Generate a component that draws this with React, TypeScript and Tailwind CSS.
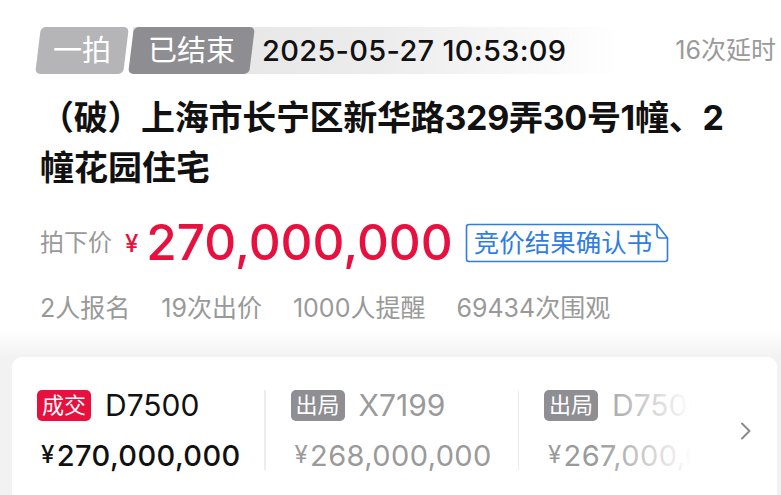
import React from "react";

function Badge() {
  return (
    <div className="relative ml-[12px] flex h-[40px] w-[204px] items-center pl-[9px]">
      <svg
        className="absolute inset-0"
        width="204"
        height="40"
        viewBox="0 0 204 40"
        fill="none"
      >
        <path
          d="M4 1.5 H192 L202.5 15 V36 Q202.5 38.5 200 38.5 H4 Q1.5 38.5 1.5 36 V4 Q1.5 1.5 4 1.5 Z"
          stroke="#2f7de1"
          strokeWidth="1.6"
          strokeLinejoin="round"
        />
        <path
          d="M192 1.5 V12 Q192 15 195 15 H202.5"
          stroke="#2f7de1"
          strokeWidth="1.6"
          strokeLinejoin="round"
        />
      </svg>
      <span className="relative text-[25.5px] leading-none text-[#2f7de1]">竞价结果确认书</span>
    </div>
  );
}

function Column({
  tag,
  name,
  price,
  win,
  divider,
}: {
  tag: string;
  name: string;
  price: string;
  win?: boolean;
  divider?: boolean;
}) {
  return (
    <div className="flex shrink-0">
      <div className={divider ? "w-[227px] shrink-0" : "w-[260px] shrink-0"}>
        <div className="flex h-[32px] items-center">
          <span
            className={
              win
                ? "flex h-[31px] items-center rounded-[5px] bg-[#e8103f] px-[5px] text-[22px] leading-none text-white"
                : "flex h-[31px] items-center rounded-[5px] bg-[#8e8e93] px-[5px] text-[22px] leading-none text-white"
            }
          >
            {tag}
          </span>
          <span
            className={
              win
                ? "ml-[14px] text-[30px] leading-none text-[#111]"
                : "ml-[14px] text-[30px] leading-none text-[#9a9a9a]"
            }
          >
            {name}
          </span>
        </div>
        <div
          className={
            win
              ? "mt-[16px] flex h-[36px] items-center pl-[4px] text-[29px] font-medium leading-none tracking-[0.4px] text-[#111]"
              : "mt-[16px] flex h-[36px] items-center pl-[4px] text-[29px] leading-none tracking-[0.4px] text-[#9a9a9a]"
          }
        >
          <span className="mr-[2px] text-[24px]">¥</span>
          {price}
        </div>
      </div>
      {divider && (
        <div className="mr-[25px] mt-[1px] h-[80px] w-[1.5px] bg-[#ececec]" />
      )}
    </div>
  );
}

export default function App() {
  return (
    <div className="h-[495px] w-full overflow-hidden bg-white font-[Inter,'Noto_Sans_CJK_SC',sans-serif]">
      <div className="px-[40px] pt-[27px]">
        {/* header row */}
        <div className="-mr-[35px] flex h-[47px] items-center">
          <div className="relative -ml-[2px] flex h-[47px] items-center">
            <div className="absolute left-[95px] top-0 h-[47px] w-[490px] bg-gradient-to-r from-[#e4e4e4] via-[#ececec] to-white" />
            <div className="relative flex h-[47px] items-center -skew-x-[7deg] rounded-[5px] bg-[#b5b5b7] px-[15px]">
              <span className="skew-x-[7deg] text-[29px] leading-none text-white">一拍</span>
            </div>
            <div className="relative ml-[5px] flex h-[47px] items-center -skew-x-[7deg] rounded-[5px] bg-[#8e8e92] px-[17px]">
              <span className="skew-x-[7deg] text-[29px] leading-none text-white">已结束</span>
            </div>
            <span className="relative ml-[10px] text-[29px] font-medium leading-none tracking-[0.3px] text-[#111]">
              2025-05-27 10:53:09
            </span>
          </div>
          <div className="flex-1" />
          <span className="text-[25px] leading-none text-[#9a9a9a]">16次延时</span>
        </div>

        {/* title */}
        <div className="mt-[19px] text-[34px] font-bold leading-[50px] text-[#111]">
          <div className="tracking-[-0.3px]">（破）上海市长宁区新华路329弄30号1幢、2</div>
          <div>幢花园住宅</div>
        </div>

        {/* price */}
        <div className="mt-[20px] flex h-[60px] items-center">
          <span className="text-[24px] leading-none text-[#999]">拍下价</span>
          <span className="ml-[13px] mt-[2px] text-[24px] font-medium leading-none text-[#e8103f]">¥</span>
          <span className="ml-[8px] text-[49.5px] font-medium leading-none text-[#e8103f]">
            270,000,000
          </span>
          <Badge />
        </div>

        {/* stats */}
        <div className="mt-[19px] flex h-[32px] items-center gap-[31px] text-[25px] leading-none text-[#999]">
          <span>2人报名</span>
          <span>19次出价</span>
          <span>1000人提醒</span>
          <span>69434次围观</span>
        </div>
      </div>

      <div className="mt-[6px] h-[27px] bg-gradient-to-b from-white to-[#f2f2f2]" />

      <div className="h-[200px] bg-[#f2f2f2]">
        <div className="relative ml-[12px] mr-[4px] h-[200px] overflow-hidden rounded-t-[10px] bg-white pl-[25px] pt-[32px]">
          <div className="flex">
            <Column tag="成交" name="D7500" price="270,000,000" win divider />
            <Column tag="出局" name="X7199" price="268,000,000" divider />
            <Column tag="出局" name="D7500" price="267,000,000" />
          </div>
          <div className="absolute right-0 top-0 flex h-full w-[180px] items-start">
            <div className="h-full w-[95px] bg-gradient-to-r from-white/0 to-white" />
            <div className="flex h-full flex-1 items-start bg-white pt-[65px]">
              <svg width="12" height="18" viewBox="0 0 12 18" fill="none" className="ml-[48px]">
                <path d="M2 1.5 L9.5 9 L2 16.5" stroke="#8a8a8a" strokeWidth="2" strokeLinecap="round" strokeLinejoin="round" />
              </svg>
            </div>
          </div>
        </div>
      </div>
    </div>
  );
}
